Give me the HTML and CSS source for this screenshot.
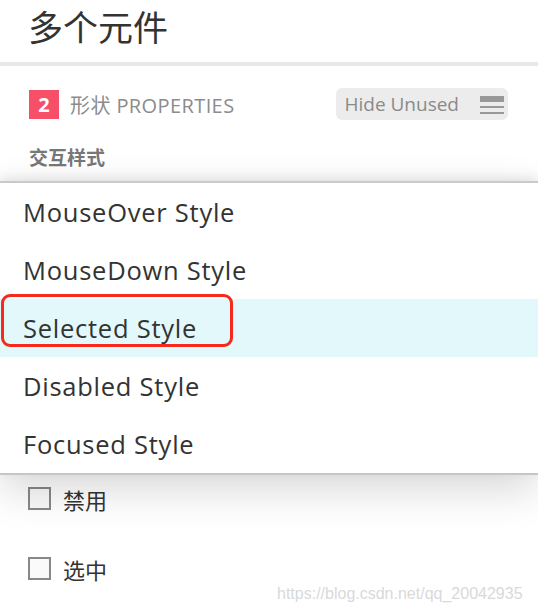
FILE: index.html
```html
<!DOCTYPE html>
<html lang="zh">
<head>
<meta charset="utf-8">
<title>多个元件</title>
<link rel="stylesheet" href="styles.css">
</head>
<body>
<div class="page">
  <header class="header">
    <h1 class="title">多个元件</h1>
  </header>
  <div class="sep"></div>
  <section class="props">
    <div class="props-head">
      <span class="badge">2</span>
      <span class="props-label">形状 PROPERTIES</span>
      <button class="hide-btn">
        <span class="hide-text">Hide Unused</span>
        <span class="hamburger"><i class="bar bar-thick"></i><i class="bar"></i><i class="bar"></i></span>
      </button>
    </div>
    <h2 class="group-title">交互样式</h2>
    <ul class="checks">
      <li class="check-row"><span class="box"></span><span class="check-label">禁用</span></li>
      <li class="check-row"><span class="box"></span><span class="check-label">选中</span></li>
    </ul>
  </section>

  <ul class="menu">
    <li class="menu-item">MouseOver Style</li>
    <li class="menu-item">MouseDown Style</li>
    <li class="menu-item selected">Selected Style<span class="mark"></span></li>
    <li class="menu-item">Disabled Style</li>
    <li class="menu-item">Focused Style</li>
  </ul>

  <div class="watermark">https://blog.csdn.net/qq_20042935</div>
</div>
</body>
</html>
```

FILE: styles.css
```css
* { box-sizing: border-box; }
html, body { margin: 0; padding: 0; background: #fff; }
body {
  font-family: "Open Sans", "Noto Sans CJK SC", sans-serif;
  color: #333;
}
.page {
  position: relative;
  width: 538px;
  height: 614px;
  overflow: hidden;
}
.header {
  height: 62px;
  padding: 0 0 0 28px;
}
.title {
  margin: 0;
  font-family: "Noto Sans CJK SC", sans-serif;
  font-size: 35px;
  font-weight: 400;
  line-height: 51px;
  color: #333;
}
.sep {
  height: 4px;
  background: #e8e8e8;
}
.props-head {
  display: flex;
  align-items: center;
  margin-top: 22px;
  padding: 0 30px 0 29px;
  height: 32px;
}
.badge {
  width: 30px;
  height: 29px;
  background: #f74f68;
  color: #fff;
  font-weight: 700;
  font-size: 20px;
  line-height: 29px;
  text-align: center;
  margin-right: 11px;
}
.props-label {
  font-size: 20px;
  letter-spacing: 0.4px;
  color: #8c8c8c;
  font-family: "Open Sans", "Noto Sans CJK SC", sans-serif;
}
.hide-btn {
  margin-left: auto;
  display: flex;
  align-items: center;
  height: 32px;
  padding: 0 4px 0 8px;
  border: 0;
  border-radius: 6px;
  background: #ececec;
  font-family: "Open Sans", sans-serif;
}
.hide-text {
  font-size: 19px;
  color: #8a8a8a;
}
.hamburger {
  display: flex;
  flex-direction: column;
  width: 24px;
  margin-left: 21px;
  margin-top: 2px;
}
.bar {
  display: block;
  height: 2px;
  background: #999;
  margin-bottom: 4px;
}
.bar-thick { height: 6px; }
.bar:last-child { margin-bottom: 0; }
.group-title {
  margin: 24px 0 0 29px;
  font-size: 19px;
  font-weight: 700;
  color: #777;
  line-height: 26px;
  font-family: "Noto Sans CJK SC", sans-serif;
}
.checks {
  list-style: none;
  margin: 0;
  padding: 317px 0 0 28px;
}
.check-row {
  display: flex;
  align-items: center;
  height: 23px;
  margin-bottom: 47px;
}
.box {
  width: 23px;
  height: 23px;
  border: 2px solid #888;
  background: #fafafa;
}
.check-label {
  margin-left: 12px;
  font-size: 22px;
  color: #333;
  font-family: "Noto Sans CJK SC", sans-serif;
}
.menu {
  position: absolute;
  top: 181px;
  left: 0;
  width: 538px;
  margin: 0;
  padding: 0;
  list-style: none;
  background: #fff;
  border-top: 2px solid #cacaca;
  border-bottom: 2px solid #c6c6c6;
  box-shadow: 0 -4px 10px rgba(0,0,0,0.08), 0 14px 40px rgba(0,0,0,0.16);
}
.menu-item {
  position: relative;
  height: 58px;
  line-height: 58px;
  padding-left: 23px;
  font-size: 25.5px;
  letter-spacing: 0.75px;
  color: #333;
}
.menu-item.selected { background: #e2f8fa; }
.mark {
  position: absolute;
  left: 1px;
  top: -5px;
  width: 232px;
  height: 53px;
  border: 3px solid #f52a1c;
  border-radius: 9px;
}
.watermark {
  position: absolute;
  left: 277px;
  top: 585px;
  font-family: "Liberation Sans", sans-serif;
  font-size: 16px;
  color: #d9d9d9;
}
```
